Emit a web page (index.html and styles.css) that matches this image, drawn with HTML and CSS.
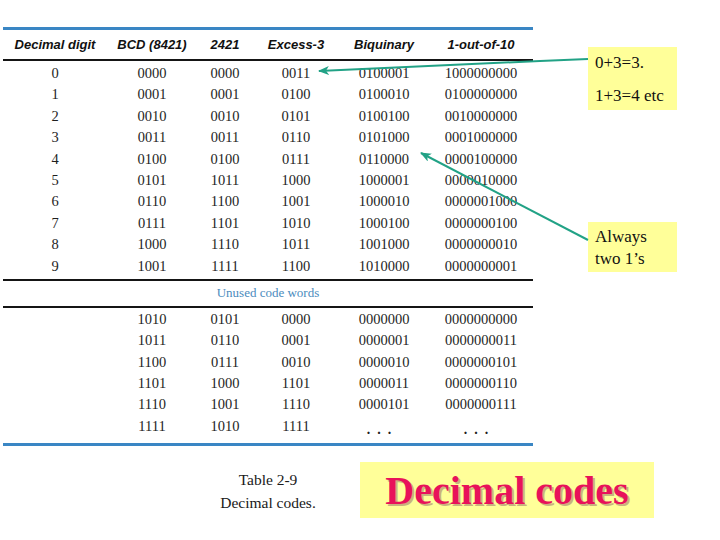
FILE: index.html
```html
<!DOCTYPE html>
<html>
<head>
<meta charset="utf-8">
<link rel="stylesheet" href="styles.css">
</head>
<body>
<div class="page">
  <div class="top">
    <div class="table">
      <div class="row head">
        <div>Decimal digit</div><div>BCD (8421)</div><div>2421</div><div>Excess-3</div><div>Biquinary</div><div>1-out-of-10</div>
      </div>
      <div class="body used">
        <div class="row"><div>0</div><div>0000</div><div>0000</div><div>0011</div><div>0100001</div><div>1000000000</div></div>
        <div class="row"><div>1</div><div>0001</div><div>0001</div><div>0100</div><div>0100010</div><div>0100000000</div></div>
        <div class="row"><div>2</div><div>0010</div><div>0010</div><div>0101</div><div>0100100</div><div>0010000000</div></div>
        <div class="row"><div>3</div><div>0011</div><div>0011</div><div>0110</div><div>0101000</div><div>0001000000</div></div>
        <div class="row"><div>4</div><div>0100</div><div>0100</div><div>0111</div><div>0110000</div><div>0000100000</div></div>
        <div class="row"><div>5</div><div>0101</div><div>1011</div><div>1000</div><div>1000001</div><div>0000010000</div></div>
        <div class="row"><div>6</div><div>0110</div><div>1100</div><div>1001</div><div>1000010</div><div>0000001000</div></div>
        <div class="row"><div>7</div><div>0111</div><div>1101</div><div>1010</div><div>1000100</div><div>0000000100</div></div>
        <div class="row"><div>8</div><div>1000</div><div>1110</div><div>1011</div><div>1001000</div><div>0000000010</div></div>
        <div class="row"><div>9</div><div>1001</div><div>1111</div><div>1100</div><div>1010000</div><div>0000000001</div></div>
      </div>
      <div class="unused-label">Unused code words</div>
      <div class="body unused">
        <div class="row"><div></div><div>1010</div><div>0101</div><div>0000</div><div>0000000</div><div>0000000000</div></div>
        <div class="row"><div></div><div>1011</div><div>0110</div><div>0001</div><div>0000001</div><div>0000000011</div></div>
        <div class="row"><div></div><div>1100</div><div>0111</div><div>0010</div><div>0000010</div><div>0000000101</div></div>
        <div class="row"><div></div><div>1101</div><div>1000</div><div>1101</div><div>0000011</div><div>0000000110</div></div>
        <div class="row"><div></div><div>1110</div><div>1001</div><div>1110</div><div>0000101</div><div>0000000111</div></div>
        <div class="row"><div></div><div>1111</div><div>1010</div><div>1111</div><div class="dots">.&nbsp;&nbsp;.&nbsp;&nbsp;.</div><div class="dots">.&nbsp;&nbsp;.&nbsp;&nbsp;.</div></div>
      </div>
    </div>
    <div class="notes">
      <div class="note note1"><p>0+3=3.</p><p>1+3=4 etc</p></div>
      <div class="note note2"><p>Always</p><p>two 1’s</p></div>
    </div>
  </div>
  <div class="bottom">
    <div class="caption">Table 2-9<br>Decimal codes.</div>
    <div class="title">Decimal codes</div>
  </div>
  <svg class="arrows" width="720" height="540" viewBox="0 0 720 540">
    <defs>
      <marker id="ah" markerWidth="11" markerHeight="9" refX="10" refY="4.5" orient="auto" markerUnits="userSpaceOnUse">
        <path d="M0,0 L11,4.5 L0,9 L3,4.5 Z" fill="#22a286"/>
      </marker>
    </defs>
    <polyline points="588,59 540,61 319,71" fill="none" stroke="#22a286" stroke-width="2" marker-end="url(#ah)"/>
    <line x1="588" y1="240" x2="421" y2="153" stroke="#22a286" stroke-width="2" marker-end="url(#ah)"/>
  </svg>
</div>
</body>
</html>
```
FILE: styles.css
```css
html, body {
  margin: 0;
  padding: 0;
  background: #ffffff;
}
.page {
  position: relative;
  width: 720px;
  height: 540px;
  overflow: hidden;
}
.top {
  display: flex;
  padding: 27px 0 0 3px;
}
.table {
  width: 530px;
  border-top: 3px solid #3a86c4;
  border-bottom: 3.5px solid #3a86c4;
}
.row {
  display: grid;
  grid-template-columns: 104px 90px 56px 86px 90px 104px;
  text-align: center;
  height: 21.4px;
  line-height: 21.4px;
  font-family: "Liberation Serif", "Times New Roman", serif;
  font-size: 14.5px;
  color: #1e1e1e;
  white-space: nowrap;
}
.row.head {
  height: 29px;
  line-height: 29px;
  font-family: "Liberation Sans", Arial, sans-serif;
  font-weight: bold;
  font-style: italic;
  font-size: 13px;
  color: #111;
  border-bottom: 2px solid #151515;
}
.body.used {
  padding: 2px 0 2.5px;
  border-bottom: 2px solid #151515;
}
.unused-label {
  height: 24.5px;
  line-height: 24.5px;
  text-align: center;
  font-family: "Liberation Serif", "Times New Roman", serif;
  font-size: 13px;
  color: #4b8bbd;
  border-bottom: 2px solid #151515;
}
.body.unused {
  padding: 1px 0 5.3px;
}
.dots {
  position: relative;
  top: 3px;
  padding-right: 10px;
  font-size: 14px;
  font-weight: bold;
}
.notes {
  margin-left: 55px;
  width: 89px;
  display: flex;
  flex-direction: column;
}
.note {
  background: #ffff99;
  font-family: "Liberation Serif", "Times New Roman", serif;
  font-size: 17px;
  color: #111;
  padding-left: 7px;
}
.note p {
  margin: 0;
}
.note1 {
  margin-top: 20px;
  height: 63px;
  box-sizing: border-box;
  padding-top: 6px;
  line-height: 20px;
}
.note1 p + p {
  margin-top: 13px;
}
.note2 {
  margin-top: 112px;
  height: 50px;
  box-sizing: border-box;
  padding-top: 4px;
  line-height: 22px;
}
.bottom {
  display: flex;
  align-items: center;
  margin-top: 16px;
  padding-left: 218px;
}
.caption {
  width: 100px;
  text-align: center;
  font-family: "Liberation Serif", "Times New Roman", serif;
  font-size: 15.5px;
  line-height: 23px;
  color: #1a1a1a;
  margin-top: 2px;
}
.title {
  margin-left: 42px;
  width: 294px;
  height: 56px;
  background: #ffff99;
  text-align: center;
  font-family: "Liberation Serif", "Times New Roman", serif;
  font-weight: bold;
  font-size: 40px;
  line-height: 58px;
  color: #e8125a;
  text-shadow: 2px 2px 0 #c9b27e;
}
.arrows {
  position: absolute;
  left: 0;
  top: 0;
  pointer-events: none;
}
```
